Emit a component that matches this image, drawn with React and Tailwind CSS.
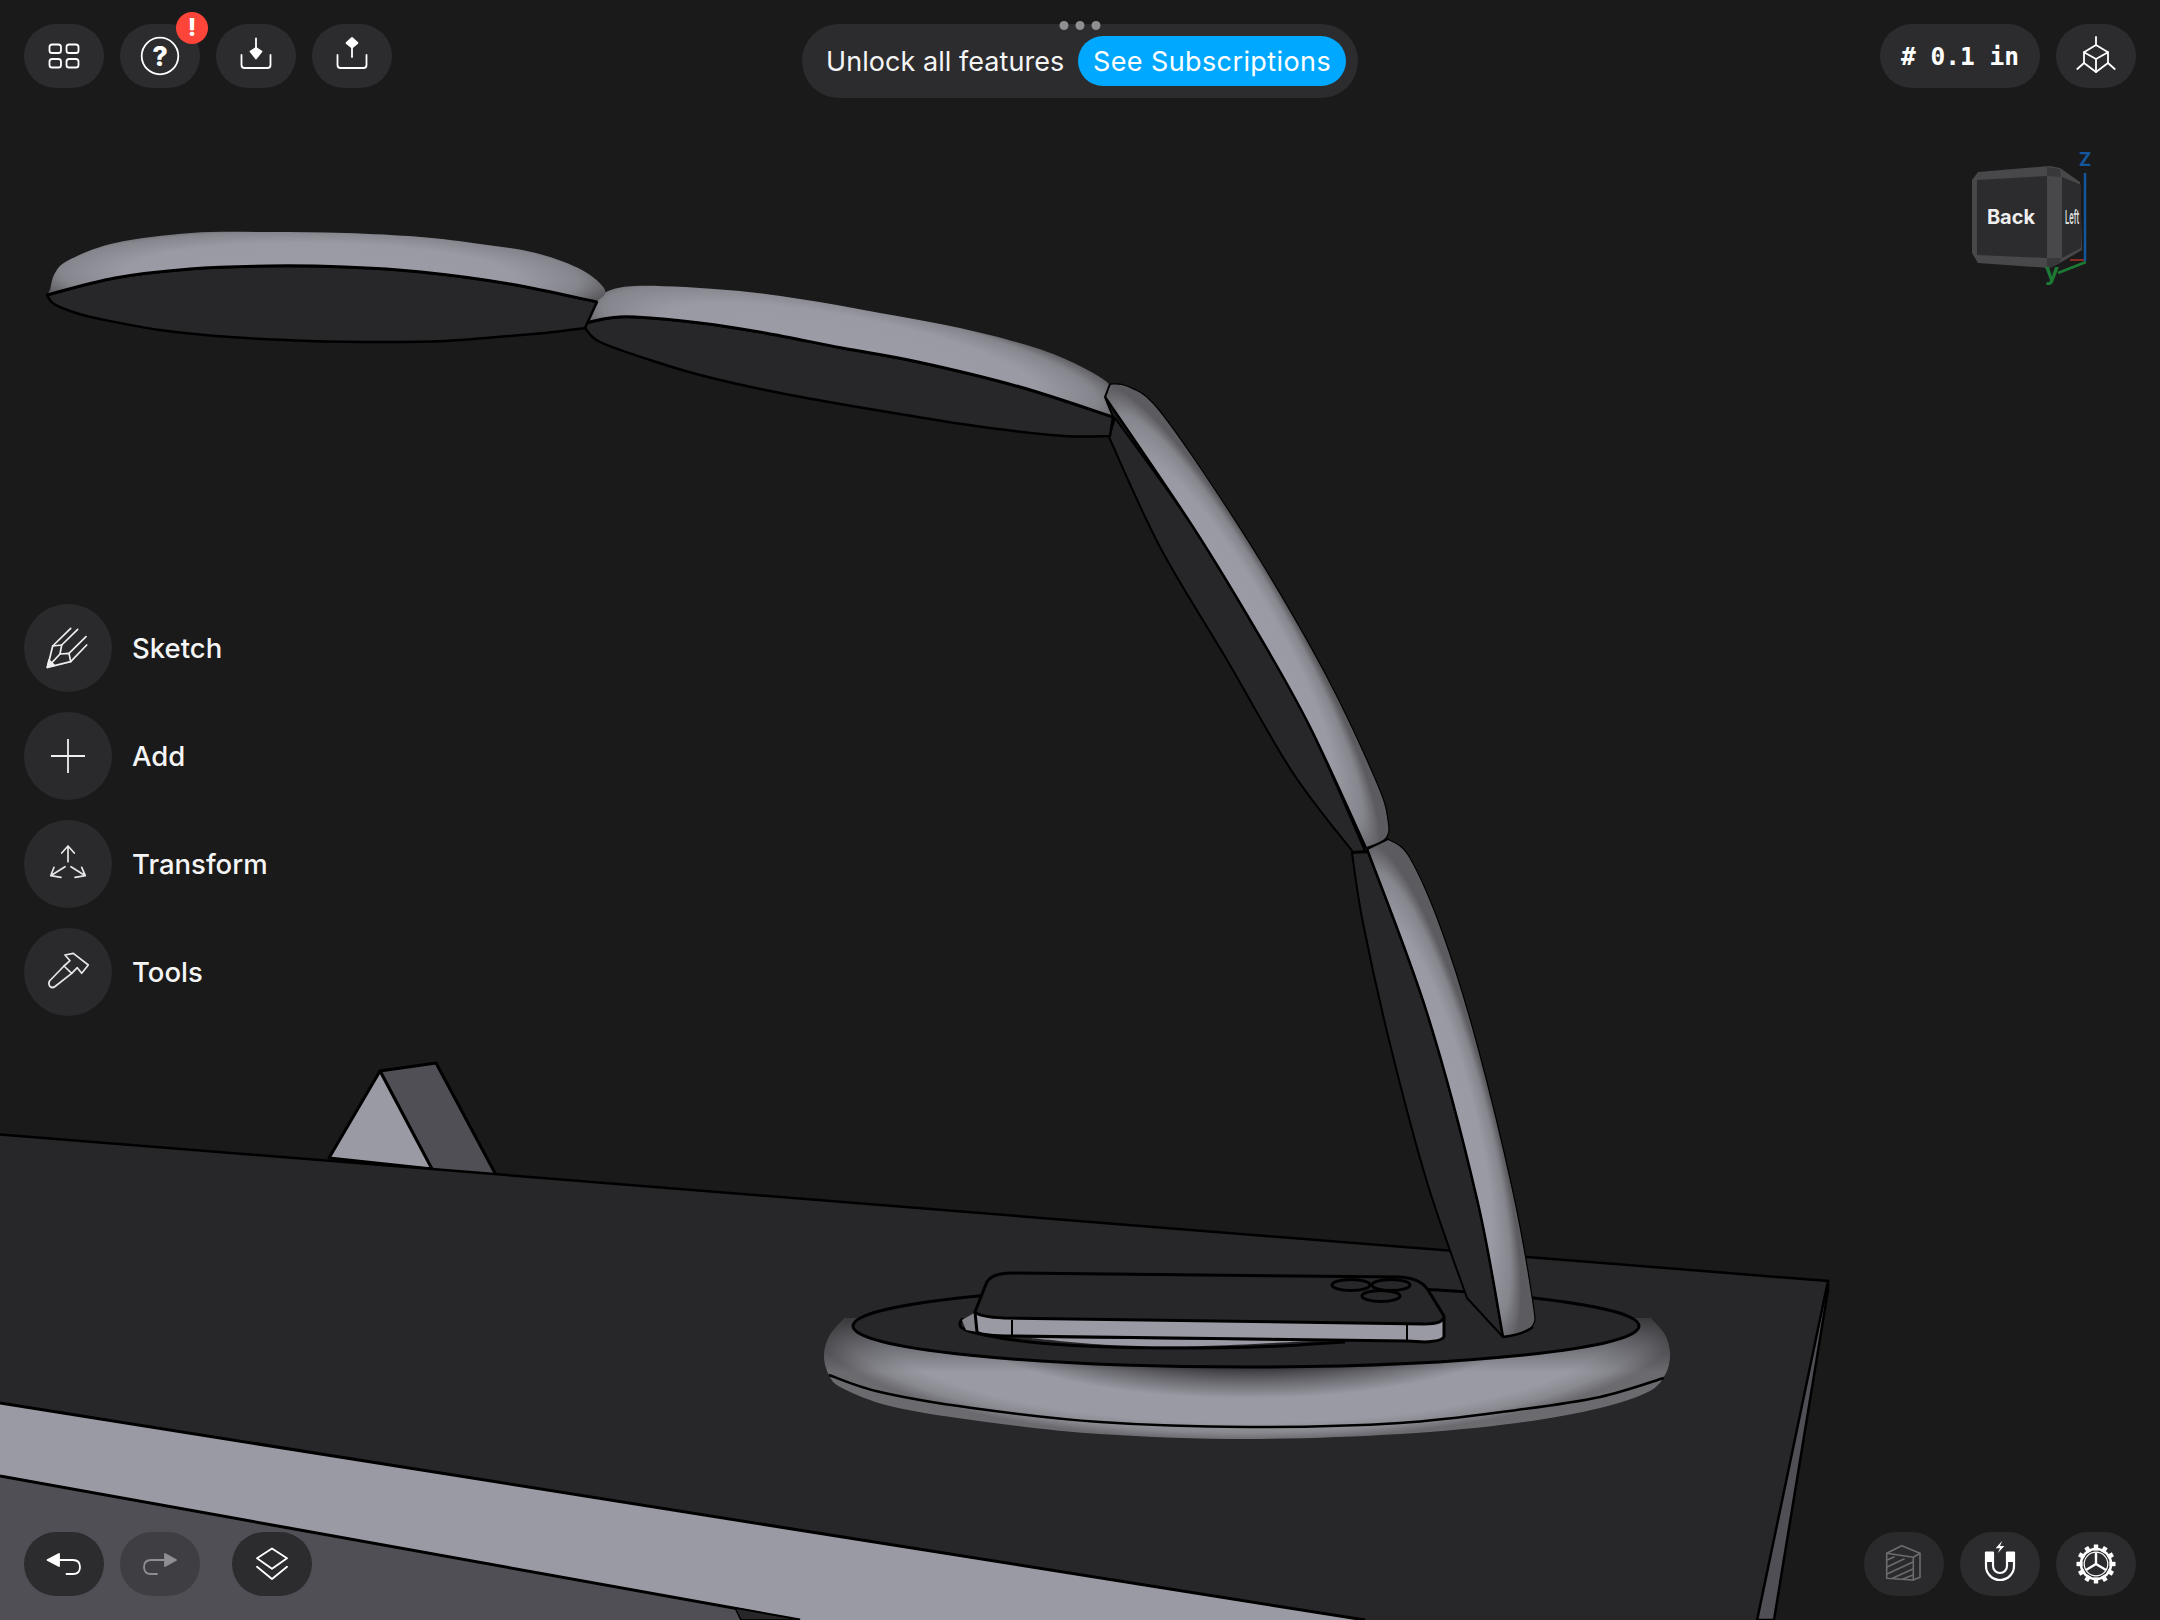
import React from "react";

const seg = (pts) => {
  let d = "";
  for (let i = 0; i < pts.length - 1; i++) {
    const p0 = pts[i - 1] || pts[i];
    const p1 = pts[i];
    const p2 = pts[i + 1];
    const p3 = pts[i + 2] || p2;
    const c1 = [p1[0] + (p2[0] - p0[0]) / 6, p1[1] + (p2[1] - p0[1]) / 6];
    const c2 = [p2[0] - (p3[0] - p1[0]) / 6, p2[1] - (p3[1] - p1[1]) / 6];
    d += `C${c1[0]} ${c1[1]} ${c2[0]} ${c2[1]} ${p2[0]} ${p2[1]} `;
  }
  return d;
};
const path = (segments, close = true) => {
  let d = `M${segments[0][0][0]} ${segments[0][0][1]} `;
  segments.forEach((s, i) => {
    if (i > 0) d += `L${s[0][0]} ${s[0][1]} `;
    d += seg(s);
  });
  return d + (close ? "Z" : "");
};

const Radial = ({ id, cx, cy, rot, rx, ry, stops }) => (
  <radialGradient id={id} gradientUnits="userSpaceOnUse" cx="0" cy="0" r="1" gradientTransform={`translate(${cx} ${cy}) rotate(${rot}) scale(${rx} ${ry})`}>
    {stops.map(([o, c]) => (
      <stop key={o} offset={o} stopColor={c} />
    ))}
  </radialGradient>
);

const SHADE = [
  [0, "#9c9ca6"],
  [0.66, "#9a9aa4"],
  [0.88, "#85858d"],
  [1, "#5c5c60"],
];
const L = "#000";
const DARK = "#27272a";
const GRAY = "#9a9aa4";

function Scene() {
  const head1Edge = [[47, 295], [115, 278], [190, 269], [268, 266], [345, 267], [421, 272], [510, 284], [597, 302]];
  const head1Bottom = [[47, 295], [54, 304], [76, 313], [100, 319], [160, 330], [230, 337], [310, 341], [383, 342], [445, 341], [497, 337], [545, 333], [585, 328]];
  const head1Top = [[50, 290], [55, 273], [69, 260], [115, 243], [191, 233], [268, 232], [345, 233], [421, 237], [480, 244], [536, 253], [582, 270], [605, 290], [597, 302]];

  const head2Edge = [[585, 323], [610, 318], [635, 317], [700, 323], [765, 333], [842, 348], [918, 362], [1020, 387], [1113, 417]];
  const head2Top = [[585, 322], [588, 308], [600, 295], [635, 286], [727, 290], [800, 299], [880, 313], [960, 328], [1033, 347], [1080, 366], [1110, 385], [1105, 397], [1113, 417]];
  const head2Bottom = [[585, 328], [600, 342], [650, 360], [700, 375], [765, 390], [840, 404], [918, 417], [990, 428], [1064, 436], [1110, 436]];

  const lowerInner = [[1367, 849], [1427, 1013], [1477, 1199], [1503, 1337]];
  const midInner = [[1105, 397], [1193, 527], [1260, 637], [1310, 727], [1366, 848]];

  return (
    <svg className="absolute inset-0" width="2160" height="1620" viewBox="0 0 2160 1620">
      <defs>
        <Radial id="h1" cx={320} cy={276} rot={1} rx={295} ry={50} stops={SHADE} />
        <Radial id="h2" cx={850} cy={354} rot={11} rx={285} ry={56} stops={SHADE} />
        <Radial id="a1" cx={1238} cy={622} rot={60} rx={270} ry={50} stops={SHADE} />
        <Radial id="a2" cx={1435} cy={1095} rot={74.5} rx={262} ry={52} stops={SHADE} />
        <Radial
          id="tor"
          cx={1247}
          cy={1318}
          rot={0}
          rx={436}
          ry={122}
          stops={[
            [0, "#3a3a3e"],
            [0.42, "#3c3c40"],
            [0.52, "#66666c"],
            [0.66, "#9a9aa4"],
            [0.86, "#9a9aa4"],
            [0.94, "#88888f"],
            [1, "#6a6a6f"],
          ]}
        />
        <linearGradient id="torTop" gradientUnits="userSpaceOnUse" x1="0" y1="1318" x2="0" y2="1372">
          <stop offset="0" stopColor="#000" stopOpacity="0.6" />
          <stop offset="1" stopColor="#000" stopOpacity="0" />
        </linearGradient>
      </defs>

      {/* triangle block */}
      <polygon points="380,1071 436,1063 496,1175 432,1170" fill="#4f4f55" stroke={L} strokeWidth="3" strokeLinejoin="round" />
      <polygon points="380,1071 329,1158 432,1169" fill={GRAY} stroke={L} strokeWidth="3" strokeLinejoin="round" />

      {/* table */}
      <polygon points="1828,1281 1828,1290 1774,1620 1750,1620" fill="#4f4f55" stroke={L} strokeWidth="2.5" />
      <polygon points="-6,1134 1828,1281 1755,1630 -6,1630" fill={DARK} stroke={L} strokeWidth="2.5" />
      <polygon points="0,1403 1365,1620 800,1620 0,1476" fill={GRAY} />
      <polygon points="0,1476 800,1620 0,1620" fill="#4f4f55" />
      <polyline points="0,1403 1365,1620" fill="none" stroke={L} strokeWidth="3" />
      <polyline points="0,1476 800,1620" fill="none" stroke={L} strokeWidth="3" />
      <polygon points="735,1608 800,1620 741,1620" fill={DARK} stroke={L} strokeWidth="1.5" />

      {/* round base */}
      {["url(#tor)", "url(#torTop)"].map((f) => (
        <path
          key={f}
          d={path([[[845, 1318], [830, 1335], [824, 1355], [829, 1375], [842, 1388], [890, 1406], [972, 1420], [1100, 1434], [1247, 1439], [1400, 1434], [1517, 1423], [1600, 1408], [1648, 1392], [1665, 1375], [1670, 1355], [1665, 1335], [1650, 1318]]])}
          fill={f}
        />
      ))}
      <path d={path([[[829, 1375], [880, 1392], [972, 1408], [1100, 1422], [1247, 1427], [1400, 1423], [1517, 1410], [1600, 1397], [1664, 1378]]], false)} fill="none" stroke={L} strokeWidth="2.5" />
      <ellipse cx="1246" cy="1326" rx="393" ry="41" fill={DARK} stroke={L} strokeWidth="3" />

      {/* phone */}
      <path d={path([[[962, 1318], [966, 1330], [1030, 1342], [1110, 1347], [1202, 1348], [1280, 1346], [1345, 1342]]], false)} fill="none" stroke={L} strokeWidth="3" />
      <path d={path([[[1030, 1338], [1110, 1345], [1202, 1346], [1310, 1341]]])} fill={GRAY} />
      <polygon points="962,1320 976,1312 978,1332 966,1330" fill="#85858c" />
      <path d="M975 1312 L977 1332 Q983 1336 1012 1336 L1407 1341 L1425 1342 Q1444 1341 1444 1336 L1444 1318 Z" fill={GRAY} stroke={L} strokeWidth="3" strokeLinejoin="round" />
      <line x1="1012" y1="1320" x2="1012" y2="1336" stroke={L} strokeWidth="2" />
      <line x1="1407" y1="1324" x2="1407" y2="1341" stroke={L} strokeWidth="2" />
      <path d="M975 1312 L986 1284 Q990 1273 1012 1273 L1400 1277 Q1420 1278 1428 1290 L1444 1316 Q1444 1324 1424 1324 L1004 1318 Q980 1317 975 1312 Z" fill={DARK} stroke={L} strokeWidth="3" strokeLinejoin="round" />
      <ellipse cx="1351" cy="1285" rx="19" ry="5.5" fill="none" stroke={L} strokeWidth="3" />
      <ellipse cx="1391" cy="1285" rx="19" ry="5.5" fill="none" stroke={L} strokeWidth="3" />
      <ellipse cx="1381" cy="1296" rx="19" ry="5.5" fill={DARK} stroke={L} strokeWidth="3" />

      {/* lower arm */}
      <path d={path([[[1352, 853], [1368, 852]], [[1368, 852], [1427, 1013], [1477, 1199], [1503, 1337]], [[1503, 1337], [1467, 1298]], [[1467, 1298], [1427, 1182], [1390, 1044], [1363, 923], [1352, 853]]])} fill={DARK} stroke={L} strokeWidth="2" strokeLinejoin="round" />
      <path d={path([[[1367, 849], [1388, 839]], [[1388, 839], [1410, 858], [1443, 934], [1477, 1044], [1513, 1192], [1533, 1303], [1533, 1325], [1522, 1333], [1503, 1337]], [...lowerInner].reverse()])} fill="url(#a2)" stroke={L} strokeWidth="1.2" strokeLinejoin="round" />
      <path d={path([lowerInner], false)} fill="none" stroke={L} strokeWidth="2.5" />
      <path d="M1367 849 L1388 839" fill="none" stroke={L} strokeWidth="2" />
      <path d="M1503 1337 Q1522 1335 1533 1327" fill="none" stroke={L} strokeWidth="2.5" />

      {/* middle arm */}
      <path d={path([[[1115, 418], [1193, 527], [1260, 637], [1310, 727], [1365, 851]], [[1365, 851], [1353, 852]], [[1353, 852], [1293, 773], [1227, 660], [1160, 547], [1109, 437]], [[1109, 437], [1115, 418]]])} fill={DARK} stroke={L} strokeWidth="2" strokeLinejoin="round" />
      <path d={path([[[1105, 397], [1110, 384]], [[1110, 384], [1127, 386], [1153, 403], [1193, 457], [1260, 560], [1327, 677], [1377, 783], [1388, 820], [1386, 838], [1366, 848]], [...midInner].reverse()])} fill="url(#a1)" stroke={L} strokeWidth="1.2" strokeLinejoin="round" />
      <path d={path([midInner], false)} fill="none" stroke={L} strokeWidth="2.5" />

      {/* second head */}
      <path d={path([head2Edge, [[1113, 417], [1110, 436]], [...head2Bottom].reverse(), [[585, 328], [585, 323]]])} fill={DARK} stroke={L} strokeWidth="2.5" strokeLinejoin="round" />
      <path d={path([head2Top, [...head2Edge].reverse()])} fill="url(#h2)" />
      <path d={path([head2Edge], false)} fill="none" stroke={L} strokeWidth="3" />
      <path d="M1110 384 L1105 397 L1113 417" fill="none" stroke={L} strokeWidth="2" />

      {/* first head */}
      <path d={path([head1Edge, [[597, 302], [585, 328]], [...head1Bottom].reverse()])} fill={DARK} stroke={L} strokeWidth="2.5" strokeLinejoin="round" />
      <path d={path([head1Top, [...head1Edge].reverse()])} fill="url(#h1)" />
      <path d={path([head1Edge], false)} fill="none" stroke={L} strokeWidth="3" />

      {/* view cube */}
      <polygon points="1978,172 2050,166 2060,168 2080,182 2082,250 2060,263 2050,268 1978,263 1972,253 1972,180" fill="#48484a" />
      <polygon points="1977,180 2047,176 2047,258 1977,255" fill="#2c2c2e" />
      <polygon points="2062,177 2081,185 2081,248 2062,258" fill="#2c2c2e" />
      <polygon points="2047,167 2060,169 2061,177 2047,176" fill="#38383a" />
      <polygon points="2047,258 2061,258 2060,263 2050,268 2047,267" fill="#38383a" />
      <text x="2011" y="224" textAnchor="middle" fontFamily="Inter, sans-serif" fontWeight="700" fontSize="20" fill="#eeeeee">Back</text>
      <text transform="translate(2072 224) scale(0.4 1)" textAnchor="middle" fontFamily="Inter, sans-serif" fontWeight="600" fontSize="19" fill="#dddddd">Left</text>
      <line x1="2070" y1="260" x2="2085" y2="260" stroke="#8a2a22" strokeWidth="2" />
      <line x1="2085" y1="173" x2="2085" y2="261" stroke="#14569c" strokeWidth="2.5" />
      <line x1="2086" y1="262" x2="2058" y2="273" stroke="#1c7a35" strokeWidth="2.5" />
      <text x="2085" y="166" textAnchor="middle" fontFamily="Inter, sans-serif" fontWeight="700" fontSize="19" fill="#14569c">Z</text>
      <text x="2052" y="280" textAnchor="middle" fontFamily="Inter, sans-serif" fontWeight="700" fontSize="24" fill="#1c7a35">y</text>
    </svg>
  );
}

const S = ({ children, w = 80, h = 64, ...p }) => (
  <svg width={w} height={h} viewBox={`0 0 ${w} ${h}`} fill="none" stroke="#fff" strokeWidth="1.8" strokeLinecap="round" strokeLinejoin="round" {...p}>
    {children}
  </svg>
);

const Btn = ({ children, className = "bg-[#2c2c2e]" }) => (
  <div className={`relative flex h-16 w-20 shrink-0 items-center justify-center rounded-full ${className}`}>{children}</div>
);

const Grid4 = () => (
  <S>
    <rect x="25.5" y="20.5" width="11.5" height="8.5" rx="2.6" />
    <rect x="42.5" y="20.5" width="12" height="8.5" rx="2.6" />
    <rect x="25.5" y="35" width="11.5" height="8.5" rx="2.6" />
    <rect x="42.5" y="35" width="12" height="8.5" rx="2.6" />
  </S>
);
const Help = () => (
  <S>
    <circle cx="40" cy="32" r="18.3" />
    <text x="40" y="41.5" textAnchor="middle" fill="#fff" stroke="none" fontFamily="Inter, sans-serif" fontWeight="800" fontSize="27">?</text>
  </S>
);
const Tray = () => <path d="M25.5 31 V41 Q25.5 44 28.5 44 H51.5 Q54.5 44 54.5 41 V31" />;
const Download = () => (
  <S>
    <Tray />
    <line x1="40" y1="14.5" x2="40" y2="26" />
    <path d="M40 24 L45.5 27.5 L40 34.5 L34.5 27.5 Z" fill="#fff" />
  </S>
);
const Upload = () => (
  <S>
    <Tray />
    <line x1="40" y1="22" x2="40" y2="33" />
    <path d="M40 14 L45.5 19 L40 23.5 L34.5 19 Z" fill="#fff" />
  </S>
);
const Cube = () => (
  <S>
    <path d="M40 13 V21 L52 28.3 V39 L40 48 L28 39 V28.3 L40 21" />
    <path d="M28 28.3 L40 35 L52 28.3 M40 35 V48 M52 39 L58.7 45 M28 39 L21.3 45" />
  </S>
);

const Sketch = () => (
  <S w={88} h={88} stroke="#eeeeee" strokeWidth="1.7">
    <path d="M23.5 63.3 L28.7 42 L37.7 41 L36 50 L45 49.3 L46.7 57.7 Z" />
    <path d="M23.5 63.3 L36 50 M28.7 42 L46.7 24.3 M37.7 41 L53.7 25.3 M45 49.3 L62 32.7 M46.7 57.7 L62.7 41" />
    <path d="M23.3 63.3 L25 56 L30.5 61.5 Z" fill="#eeeeee" />
  </S>
);
const Plus = () => (
  <S w={88} h={88} stroke="#eeeeee" strokeWidth="1.8" strokeLinecap="butt">
    <path d="M44 27 V61 M27 44 H61" />
  </S>
);
const Move = () => (
  <S w={88} h={88} stroke="#e6e6e6" strokeWidth="1.7">
    <path d="M44 26 V41.7 M37.7 33 L44 26 L50.3 33" />
    <path d="M41 46.7 L26.7 55.7 M30 47.3 L26.7 55.7 L37 57.3" />
    <path d="M47 46.7 L61.3 55.7 M57.7 47.3 L61.3 55.7 L51 57.3" />
  </S>
);
const Hammer = () => (
  <S w={88} h={88} stroke="#e6e6e6" strokeWidth="1.7">
    <path d="M40 38 L46 32.7 L41 27 L49.3 25.3 L64.3 37 L57.7 45.3 L53.3 39.7 L47.7 45.3 Z" />
    <path d="M40 38 L25.5 53 Q24 56 26 58.5 Q28.5 60.5 31 58.5 L47.7 45.3" />
  </S>
);

const Undo = () => (
  <S>
    <path d="M23.5 28 L35 22 V34 Z" fill="#fff" />
    <path d="M35 28 H49 Q56 28 56 35 Q56 42 49 42 H42.5" />
  </S>
);
const Redo = () => (
  <S stroke="#8e8e93">
    <path d="M56 28 L45 22 V34 Z" fill="#8e8e93" />
    <path d="M45 28 H31 Q24 28 24 35 Q24 42 31 42 H37" />
  </S>
);
const Layers = () => (
  <S>
    <path d="M40 16.5 L55 26.3 L40 36.8 L25 26.3 Z" />
    <path d="M25 34.7 L40 47 L55 34.7" />
  </S>
);
const Section = () => (
  <S stroke="#6c6c6e" strokeWidth="1.6">
    <path d="M22.7 21.3 L37.7 13.7 L56 21.3 V45.3 L49.3 48 L22.7 46.3 Z" />
    <path d="M22.7 21.3 L49.3 25.3 L56 21.3 M49.3 25.3 V48" />
    <path d="M23 28 L30 25 M23 35 L40 27 M23 42 L49 30 M29 46 L49 37 M39 47 L49 43" />
  </S>
);
const Magnet = () => (
  <S>
    <path d="M26 20.5 V34 A14 14 0 0 0 54 34 V20.5 H47 V34 A7 7 0 0 1 33 34 V20.5 Z" strokeWidth="2.2" />
    <rect x="25.5" y="20" width="8" height="10" fill="#fff" stroke="none" />
    <rect x="46.5" y="20" width="8" height="10" fill="#fff" stroke="none" />
    <path d="M42.3 8.7 L35.7 16.3 H40 L37.7 21.3 L44.3 14 H40 Z" fill="#fff" stroke="none" />
  </S>
);
const Gear = () => (
  <S>
    {Array.from({ length: 12 }).map((_, i) => (
      <rect key={i} x="37.8" y="12.5" width="4.4" height="6" fill="#fff" stroke="none" transform={`rotate(${i * 30} 40 32)`} />
    ))}
    <circle cx="40" cy="32" r="15" strokeWidth="2.6" />
    <circle cx="40" cy="32" r="11.8" strokeWidth="1.2" />
    <path d="M40 32 V20.5 M40 32 L50 38 M40 32 L30 38" strokeWidth="2.4" strokeLinecap="butt" />
  </S>
);

const tools = [
  ["Sketch", Sketch],
  ["Add", Plus],
  ["Transform", Move],
  ["Tools", Hammer],
];

export default function App() {
  return (
    <div className="relative h-[1620px] w-[2160px] overflow-hidden bg-[#1a1a1a] font-['Inter',sans-serif] text-white">
      <Scene />
      <div className="absolute inset-0 flex flex-col px-6 pb-6 pt-6">
        <div className="grid h-[74px] grid-cols-[1fr_auto_1fr] items-start">
          <div className="flex gap-4">
            <Btn><Grid4 /></Btn>
            <Btn>
              <Help />
              <span className="absolute left-14 top-[-12px] flex h-8 w-8 items-center justify-center rounded-full bg-[#ff453a] text-[24px] font-extrabold leading-none text-white">!</span>
            </Btn>
            <Btn><Download /></Btn>
            <Btn><Upload /></Btn>
          </div>
          <div className="relative flex h-[74px] w-[556px] items-center justify-between rounded-full bg-[#2c2c2e] pl-6 pr-3">
            <div className="absolute left-1/2 top-[-3px] flex -translate-x-1/2 gap-[7px]">
              <i className="h-[9px] w-[9px] rounded-full bg-[#8e8e93]" />
              <i className="h-[9px] w-[9px] rounded-full bg-[#8e8e93]" />
              <i className="h-[9px] w-[9px] rounded-full bg-[#8e8e93]" />
            </div>
            <span className="whitespace-nowrap text-[27px] leading-none tracking-[0.05px] text-[#f5f5f5]">Unlock all features</span>
            <span className="flex h-[50px] w-[268px] items-center justify-center rounded-full bg-[#00a8ff] text-[27px] leading-none tracking-[0.4px] text-white">See Subscriptions</span>
          </div>
          <div className="flex justify-end gap-4">
            <div className="flex h-16 w-40 items-center justify-center rounded-full bg-[#2c2c2e] pt-0.5 font-['DejaVu_Sans_Mono',monospace] text-[24.5px] font-bold leading-none">
              # 0.1 in
            </div>
            <Btn><Cube /></Btn>
          </div>
        </div>

        <div className="mt-[506px] flex flex-col gap-5">
          {tools.map(([label, Icon]) => (
            <div key={label} className="flex items-center gap-5">
              <div className="flex h-[88px] w-[88px] items-center justify-center rounded-full bg-[#2a2a2c]">
                <Icon />
              </div>
              <span className="pt-0.5 text-[27.5px] font-medium leading-none text-[#f5f5f5]">{label}</span>
            </div>
          ))}
        </div>

        <div className="mt-auto flex items-center justify-between">
          <div className="flex gap-4">
            <Btn><Undo /></Btn>
            <Btn className="bg-[#3f3f43]"><Redo /></Btn>
            <div className="ml-4"><Btn><Layers /></Btn></div>
          </div>
          <div className="flex gap-4">
            <Btn className="bg-[#2a2a2c]"><Section /></Btn>
            <Btn><Magnet /></Btn>
            <Btn><Gear /></Btn>
          </div>
        </div>
      </div>
    </div>
  );
}
